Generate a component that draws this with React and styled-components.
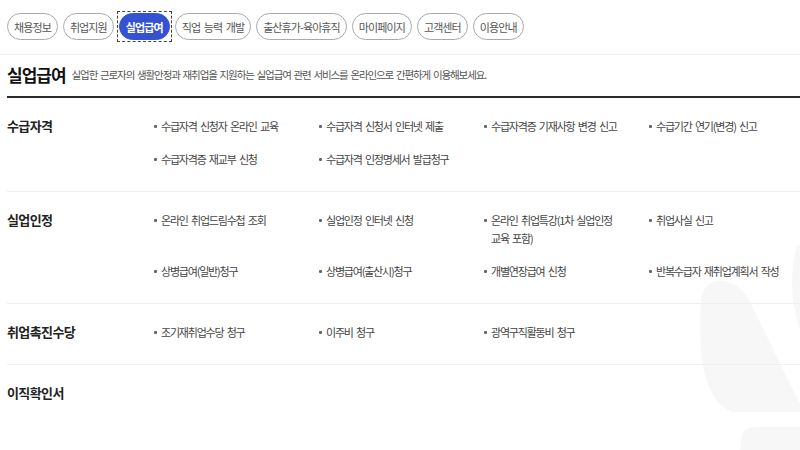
import React from 'react';
import styled, { createGlobalStyle } from 'styled-components';

const GlobalStyle = createGlobalStyle`
  html, body {
    margin: 0;
    padding: 0;
    background: #fff;
    font-family: "Noto Sans CJK KR", "Noto Sans", sans-serif;
    color: #222;
  }
  * { box-sizing: border-box; }
`;

const Page = styled.div`
  position: relative;
  width: 800px;
  height: 450px;
  overflow: hidden;
  background: #fff;
`;

const Watermark = styled.svg`
  position: absolute;
  left: 0;
  top: 0;
  width: 800px;
  height: 450px;
  pointer-events: none;
`;

const Content = styled.div`
  position: relative;
`;

const TabBar = styled.nav`
  display: flex;
  gap: 5px;
  padding: 13px 7px 14px;
  border-bottom: 1px solid #ececec;
`;

const Tab = styled.button`
  position: relative;
  height: 27px;
  padding: 0 6px;
  border-radius: 14px;
  border: 1px solid ${p => (p.$active ? '#3552d3' : '#a9a9a9')};
  background: ${p => (p.$active ? '#3552d3' : '#fff')};
  color: ${p => (p.$active ? '#fff' : '#555')};
  font-family: inherit;
  font-size: 11px;
  font-weight: ${p => (p.$active ? 700 : 400)};
  letter-spacing: -0.9px;
  word-spacing: 2px;
  white-space: nowrap;
  cursor: pointer;
  outline: none;

  &::after {
    content: '';
    display: ${p => (p.$active ? 'block' : 'none')};
    position: absolute;
    inset: -3px;
    border: 1px dashed #444;
  }
`;

const Body = styled.div`
  padding: 0 0 0 7px;
`;

const TitleRow = styled.div`
  display: flex;
  align-items: center;
  gap: 6px;
  height: 43px;
  padding-bottom: 3px;
  border-bottom: 2px solid #2b2b2b;
`;

const Title = styled.h2`
  margin: 0;
  font-size: 17px;
  font-weight: 700;
  color: #111;
  letter-spacing: -1px;
`;

const Desc = styled.p`
  margin: 0;
  font-size: 10.5px;
  color: #555;
  letter-spacing: -1.1px;
  word-spacing: 1.5px;
`;

const Section = styled.section`
  display: grid;
  grid-template-columns: 146px 1fr;
  padding: 19px 0 23px;
  border-bottom: ${p => (p.$last ? 'none' : '1px solid #efefef')};
`;

const Label = styled.h3`
  margin: 0;
  font-size: 13px;
  line-height: 18px;
  font-weight: 700;
  color: #222;
  letter-spacing: -0.6px;
`;

const Items = styled.ul`
  display: grid;
  grid-template-columns: repeat(4, 165px);
  row-gap: 15px;
  margin: 0;
  padding: 0;
  list-style: none;
`;

const Item = styled.li`
  position: relative;
  padding: 0 18px 0 8px;
  font-size: 11px;
  line-height: 18px;
  color: #444;
  letter-spacing: -1.2px;
  word-spacing: 2px;
  word-break: keep-all;

  &::before {
    content: '';
    position: absolute;
    left: 1px;
    top: 8px;
    width: 3px;
    height: 3px;
    border-radius: 1px;
    background: #666;
  }
`;

const tabs = ['채용정보', '취업지원', '실업급여', '직업 능력 개발', '출산휴가-육아휴직', '마이페이지', '고객센터', '이용안내'];

const sections = [
  {
    label: '수급자격',
    items: [
      '수급자격 신청자 온라인 교육',
      '수급자격 신청서 인터넷 제출',
      '수급자격증 기재사항 변경 신고',
      '수급기간 연기(변경) 신고',
      '수급자격증 재교부 신청',
      '수급자격 인정명세서 발급청구',
    ],
  },
  {
    label: '실업인정',
    items: [
      '온라인 취업드림수첩 조회',
      '실업인정 인터넷 신청',
      '온라인 취업특강(1차 실업인정 교육 포함)',
      '취업사실 신고',
      '상병급여(일반)청구',
      '상병급여(출산시)청구',
      '개별연장급여 신청',
      '반복수급자 재취업계획서 작성',
    ],
  },
  {
    label: '취업촉진수당',
    items: ['조기재취업수당 청구', '이주비 청구', '광역구직활동비 청구'],
  },
  { label: '이직확인서', items: [] },
];

export default function App() {
  return (
    <Page>
      <GlobalStyle />
      <Watermark viewBox="0 0 800 450">
        <path
          d="M701 300 C698 345 700 398 732 412 L800 412 L800 404 L750 302 C738 276 704 272 701 300 Z"
          fill="#f7f7f7"
        />
        <path d="M797 245 C790 270 790 300 800 330 L800 245 Z" fill="#f7f7f7" />
        <path d="M740 450 L742 434 Q745 427 756 427 L800 427 L800 450 Z" fill="#f7f7f7" />
      </Watermark>
      <Content>
        <TabBar>
          {tabs.map(t => (
            <Tab key={t} $active={t === '실업급여'}>
              {t}
            </Tab>
          ))}
        </TabBar>
        <Body>
          <TitleRow>
            <Title>실업급여</Title>
            <Desc>실업한 근로자의 생활안정과 재취업을 지원하는 실업급여 관련 서비스를 온라인으로 간편하게 이용해보세요.</Desc>
          </TitleRow>
          {sections.map((s, i) => (
            <Section key={s.label} $last={i === sections.length - 1}>
              <Label>{s.label}</Label>
              <Items>
                {s.items.map(it => (
                  <Item key={it}>{it}</Item>
                ))}
              </Items>
            </Section>
          ))}
        </Body>
      </Content>
    </Page>
  );
}
